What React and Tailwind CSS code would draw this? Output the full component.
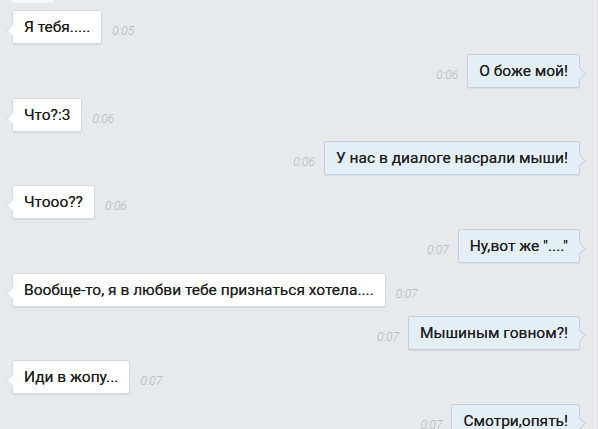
import React from "react";

const msgs = [
  { side: "l", text: "Я тебя.....", time: "0:05" },
  { side: "r", text: "О боже мой!", time: "0:06" },
  { side: "l", text: "Что?:3", time: "0:06" },
  { side: "r", text: "У нас в диалоге насрали мыши!", time: "0:06" },
  { side: "l", text: "Чтооо??", time: "0:06" },
  { side: "r", text: "Ну,вот же \"....\"", time: "0:07" },
  { side: "l", text: "Вообще-то, я в любви тебе признаться хотела....", time: "0:07" },
  { side: "r", text: "Мышиным говном?!", time: "0:07" },
  { side: "l", text: "Иди в жопу...", time: "0:07" },
  { side: "r", text: "Смотри,опять!", time: "0:07" },
];

function Time({ t }) {
  return (
    <span className="self-end pb-[6px] text-[12px] leading-[14px] italic font-light text-[#adb4bb] font-['Roboto',sans-serif]">
      {t}
    </span>
  );
}

const textCls =
  "relative z-10 whitespace-nowrap text-[15.5px] leading-[20px] text-[#1a1a1a] font-['Roboto',sans-serif] [text-shadow:0_0_0.5px_rgba(0,0,0,0.6)]";

function LeftMsg({ text, time }) {
  return (
    <div className="flex h-[34px] shrink-0 items-stretch gap-[10px] pl-[12px]">
      <div className="relative flex items-center rounded-[2px] border border-[#d6dbdf] bg-white px-[11px] shadow-[0_1px_1px_rgba(0,0,0,0.08)]">
        <div className="absolute -left-[5px] top-[15px] h-[9px] w-[9px] rotate-45 border-b border-l border-[#d6dbdf] bg-white" />
        <span className={textCls}>{text}</span>
      </div>
      <Time t={time} />
    </div>
  );
}

function RightMsg({ text, time }) {
  return (
    <div className="flex h-[34px] shrink-0 items-stretch justify-end gap-[9px] pr-[14px]">
      <Time t={time} />
      <div className="relative flex items-center rounded-[2px] border border-[#c3d0db] bg-[#e3eef6] px-[11px] shadow-[0_1px_1px_rgba(0,0,0,0.06)]">
        <div className="absolute -right-[5px] top-[14px] h-[9px] w-[9px] rotate-45 border-r border-t border-[#c3d0db] bg-[#e3eef6]" />
        <span className={textCls}>{text}</span>
      </div>
    </div>
  );
}

export default function App() {
  return (
    <div className="flex h-[429px] w-[598px] overflow-hidden bg-[#e7eaed]">
      <div className="relative flex flex-1 flex-col gap-[9.75px] pt-[10px]">
        <div className="absolute left-[12px] top-0 h-[3px] w-[41px] bg-[#f6f7f8]" />
        {msgs.map((m, i) =>
          m.side === "l" ? (
            <LeftMsg key={i} text={m.text} time={m.time} />
          ) : (
            <RightMsg key={i} text={m.text} time={m.time} />
          )
        )}
      </div>
      <div className="w-[2px] bg-[#eef0f2]" />
      <div className="w-[2px] bg-[#e5e8eb]" />
    </div>
  );
}
